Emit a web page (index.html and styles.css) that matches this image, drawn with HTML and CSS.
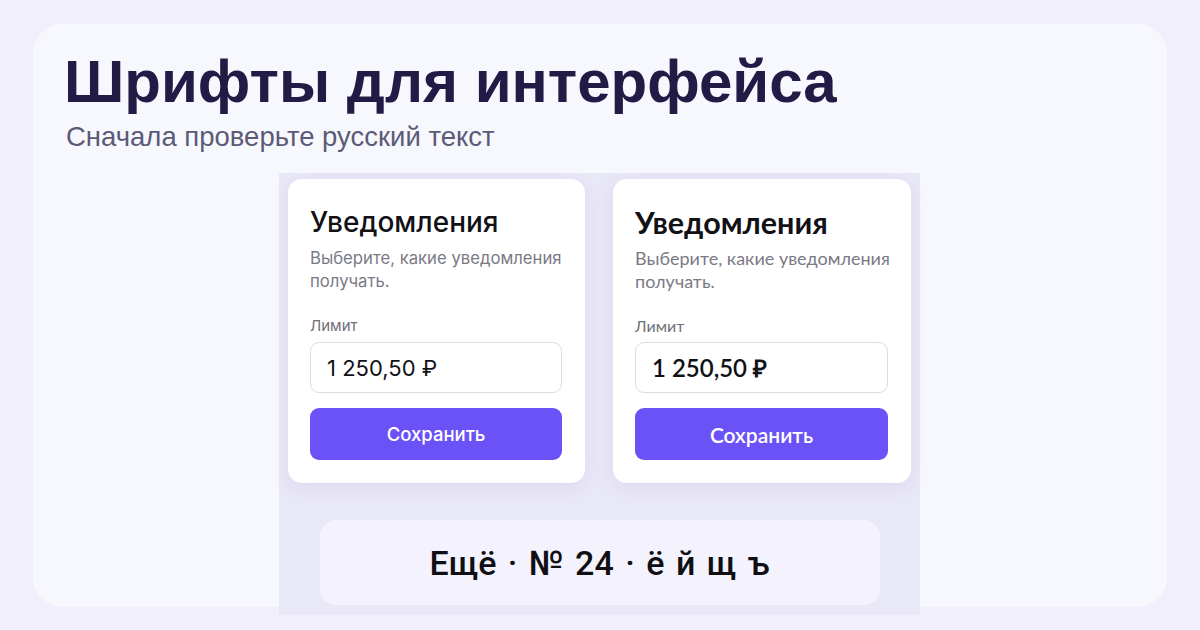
FILE: index.html
```html
<!DOCTYPE html>
<html lang="ru">

<head>
    <meta charset="UTF-8">
    <meta name="viewport" content="width=device-width, initial-scale=1.0">
    <title>Шрифты для интерфейса</title>
    <link rel="stylesheet" href="styles.css">
</head>

<body>
    <div class="panel">
        <h1 class="titulo">Шрифты для интерфейса</h1>
        <p class="subtitulo">Сначала проверьте русский текст</p>

        <div class="vitrina">
            <div class="cartoes">
                <div class="cartao cartao-inter">
                    <h2>Уведомления</h2>
                    <p class="descricao">Выберите, какие уведомления получать.</p>
                    <label class="rotulo">Лимит</label>
                    <div class="campo">1 250,50 ₽</div>
                    <button class="botao">Сохранить</button>
                </div>

                <div class="cartao cartao-geo">
                    <h2>Уведомления</h2>
                    <p class="descricao">Выберите, какие уведомления получать.</p>
                    <label class="rotulo">Лимит</label>
                    <div class="campo">1 250,50 ₽</div>
                    <button class="botao">Сохранить</button>
                </div>
            </div>

            <div class="amostra">Ещё · № 24 · ё й щ ъ</div>
        </div>
    </div>
</body>

</html>
```

FILE: styles.css
```css
body {
    margin: 0;
    padding: 24px 33px 0 33px;
    background: #f1effc;
    font-family: 'Liberation Sans', Arial, sans-serif;
    height: 630px;
    box-sizing: border-box;
    overflow: hidden;
}

.panel {
    height: 583px;
    background: #f7f8fe;
    border-radius: 30px;
    padding: 28px 0 0 31px;
    box-sizing: border-box;
}

.titulo {
    margin: 0;
    font-size: 60px;
    line-height: 60px;
    font-weight: bold;
    color: #211b45;
}

.subtitulo {
    margin: 9px 0 0 2px;
    font-size: 27.5px;
    line-height: 32px;
    color: #5c5a77;
}

.vitrina {
    width: 641px;
    margin: 20px auto 0 auto;
    position: relative;
    left: -16px;
    background: #e9e8f6;
    padding: 6px 9px 10px 9px;
    box-sizing: border-box;
}

.cartoes {
    display: grid;
    grid-template-columns: 297px 298px;
    gap: 28px;
}

.cartao {
    background: #ffffff;
    border-radius: 14px;
    padding: 26px 23px 23px 22px;
    box-shadow: 0 4px 18px rgba(120, 110, 200, 0.12);
    display: flex;
    flex-direction: column;
}

.cartao h2 {
    margin: 0;
    font-size: 28px;
    line-height: 34px;
    color: #111116;
}

.descricao {
    margin: 8px -12px 0 0;
    font-size: 16.7px;
    line-height: 23px;
    color: #7a7a86;
}

.rotulo {
    margin-top: 23px;
    font-size: 15px;
    line-height: 20px;
    color: #6f6f79;
}

.campo {
    margin-top: 6px;
    height: 51px;
    border: 1px solid #dedde3;
    border-radius: 9px;
    box-sizing: border-box;
    padding: 0 16px;
    display: flex;
    align-items: center;
    font-size: 22px;
    color: #111116;
}

.botao {
    margin-top: 15px;
    height: 52px;
    border: none;
    border-radius: 9px;
    background: #6b52f7;
    color: #ffffff;
    font-size: 18.5px;
    font-family: inherit;
    font-weight: 500;
}

.cartao-inter {
    font-family: Inter, sans-serif;
}

.cartao-inter h2 {
    font-weight: 500;
}

/* второй вариант: более широкая и жирная гарнитура */
.cartao-geo {
    font-family: Lato, sans-serif;
}

.cartao-geo h2 {
    font-size: 30.5px;
    font-weight: 700;
}

.cartao-geo .descricao {
    font-size: 18px;
}

.cartao-geo .rotulo {
    font-size: 16px;
}

.cartao-geo .campo {
    font-size: 24px;
    font-weight: 600;
}

.cartao-geo .botao {
    font-size: 21px;
    font-weight: 600;
}

.amostra {
    width: 560px;
    height: 85px;
    margin: 37px auto 0 auto;
    background: #f4f3fd;
    border-radius: 16px;
    display: flex;
    align-items: center;
    justify-content: center;
    font-family: Roboto, sans-serif;
    font-weight: 500;
    font-size: 34px;
    word-spacing: 3px;
    color: #0f0f14;
}
```
